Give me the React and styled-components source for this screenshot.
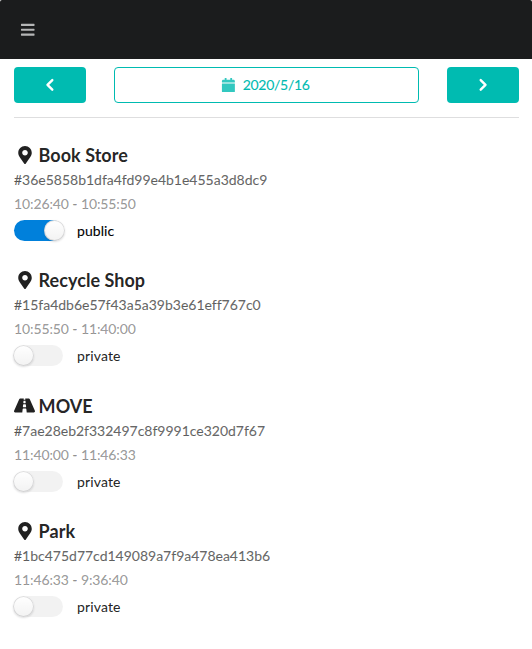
import React from 'react';
import styled, { createGlobalStyle } from 'styled-components';
import { FaBars, FaCalendar, FaMapMarkerAlt, FaRoad } from 'react-icons/fa';

const Global = createGlobalStyle`
  * { box-sizing: border-box; }
  body { margin: 0; background: #fff; font-family: Lato, 'Helvetica Neue', Arial, sans-serif; font-size: 14px; line-height: 20px; color: rgba(0,0,0,.87); }
`;
const Header = styled.header`
  height: 59px;
  background: #1b1c1d;
  border-radius: 2px 2px 0 0;
  display: flex;
  align-items: center;
  padding-left: 20.3px;
  color: rgba(255,255,255,.68);
`;
const Main = styled.main`padding: 8px 13px 0 14px;`;
const DateBar = styled.nav`
  display: grid;
  grid-template-columns: 72px 1fr 72px;
  column-gap: 28px;
  padding-bottom: 14px;
  border-bottom: 1px solid rgba(34,36,38,.15);
`;
const Button = styled.button`
  height: 36px;
  border: ${p => (p.$outline ? '1px solid #00bbb1' : '0')};
  border-radius: 4px;
  background: ${p => (p.$outline ? '#fff' : '#00bbb1')};
  color: ${p => (p.$outline ? '#00bbb1' : '#fff')};
  font: 400 14px/14px Lato, sans-serif;
  letter-spacing: -.28px;
  display: flex;
  align-items: center;
  justify-content: center;
  gap: 6.5px;
  padding: ${p => (p.$outline ? '0 2px 0 0' : '0')};
  -webkit-text-stroke: .1px currentColor;
  svg { opacity: ${p => (p.$outline ? 0.8 : 1)}; }
`;
const ChevronIcon = styled.svg`
  width: 14px;
  height: 14px;
  fill: none;
  stroke: currentColor;
  stroke-width: 2.4;
  stroke-linecap: round;
  stroke-linejoin: round;
`;
const List = styled.div`padding-top: 25px;`;
const Entry = styled.section`height: 125.4px;`;
const Title = styled.h3`
  margin: 0;
  height: 24px;
  display: flex;
  align-items: center;
  font-size: 18px;
  line-height: 24px;
  font-weight: 700;
  letter-spacing: .03px;
`;
const IconBox = styled.span`
  width: 21px;
  margin-right: 3.6px;
  display: flex;
  justify-content: center;
`;
const Line = styled.div`
  height: 24px;
  line-height: 26px;
  color: ${p => (p.$muted ? 'rgba(0,0,0,.4)' : 'rgba(0,0,0,.6)')};
  letter-spacing: ${p => (p.$muted ? '-.11px' : '-.01px')};
  -webkit-text-stroke: .15px currentColor;
`;
const Toggle = styled.label`
  display: flex;
  align-items: center;
  height: 21px;
  line-height: 21px;
  margin-top: 5px;
  gap: 14px;
  color: ${p => (p.$on ? '#000' : 'rgba(0,0,0,.87)')};
  letter-spacing: ${p => (p.$on ? '.05px' : '.14px')};
  -webkit-text-stroke: .1px currentColor;
`;
const Track = styled.span`
  width: 49px;
  height: 21px;
  border-radius: 11px;
  background: ${p => (p.$on ? '#0080db' : 'rgba(0,0,0,.05)')};
  display: flex;
`;
const Knob = styled.span`
  flex: none;
  width: 21px;
  height: 21px;
  border-radius: 50%;
  margin-left: ${p => (p.$on ? '30px' : '-1px')};
  background: #fff linear-gradient(transparent, rgba(0,0,0,.05));
  box-shadow: 0 1px 2px 0 rgba(34,36,38,.15), 0 0 0 1px rgba(34,36,38,.15) inset;
`;

const Chevron = ({ right }) => (
  <ChevronIcon viewBox="0 0 14 14" aria-hidden="true">
    <path d={right ? 'M4.7 2.1 9.5 6.9 4.7 11.7' : 'M9.3 2.1 4.5 6.9 9.3 11.7'} />
  </ChevronIcon>
);

const entries = [
  { name: 'Book Store', id: '#36e5858b1dfa4fd99e4b1e455a3d8dc9', time: '10:26:40 - 10:55:50', on: true },
  { name: 'Recycle Shop', id: '#15fa4db6e57f43a5a39b3e61eff767c0', time: '10:55:50 - 11:40:00' },
  { name: 'MOVE', id: '#7ae28eb2f332497c8f9991ce320d7f67', time: '11:40:00 - 11:46:33', move: true },
  { name: 'Park', id: '#1bc475d77cd149089a7f9a478ea413b6', time: '11:46:33 - 9:36:40' },
];

export default function App() {
  return (
    <>
      <Global />
      <Header><FaBars size={15.5} /></Header>
      <Main>
        <DateBar>
          <Button aria-label="Previous day"><Chevron /></Button>
          <Button $outline><FaCalendar size={14.8} />2020/5/16</Button>
          <Button aria-label="Next day"><Chevron right /></Button>
        </DateBar>
        <List>
          {entries.map(e => (
            <Entry key={e.id}>
              <Title><IconBox>{e.move ? <FaRoad size={21} /> : <FaMapMarkerAlt size={18} />}</IconBox>{e.name}</Title>
              <Line>{e.id}</Line>
              <Line $muted>{e.time}</Line>
              <Toggle $on={e.on}><Track $on={e.on}><Knob $on={e.on} /></Track>{e.on ? 'public' : 'private'}</Toggle>
            </Entry>
          ))}
        </List>
      </Main>
    </>
  );
}
